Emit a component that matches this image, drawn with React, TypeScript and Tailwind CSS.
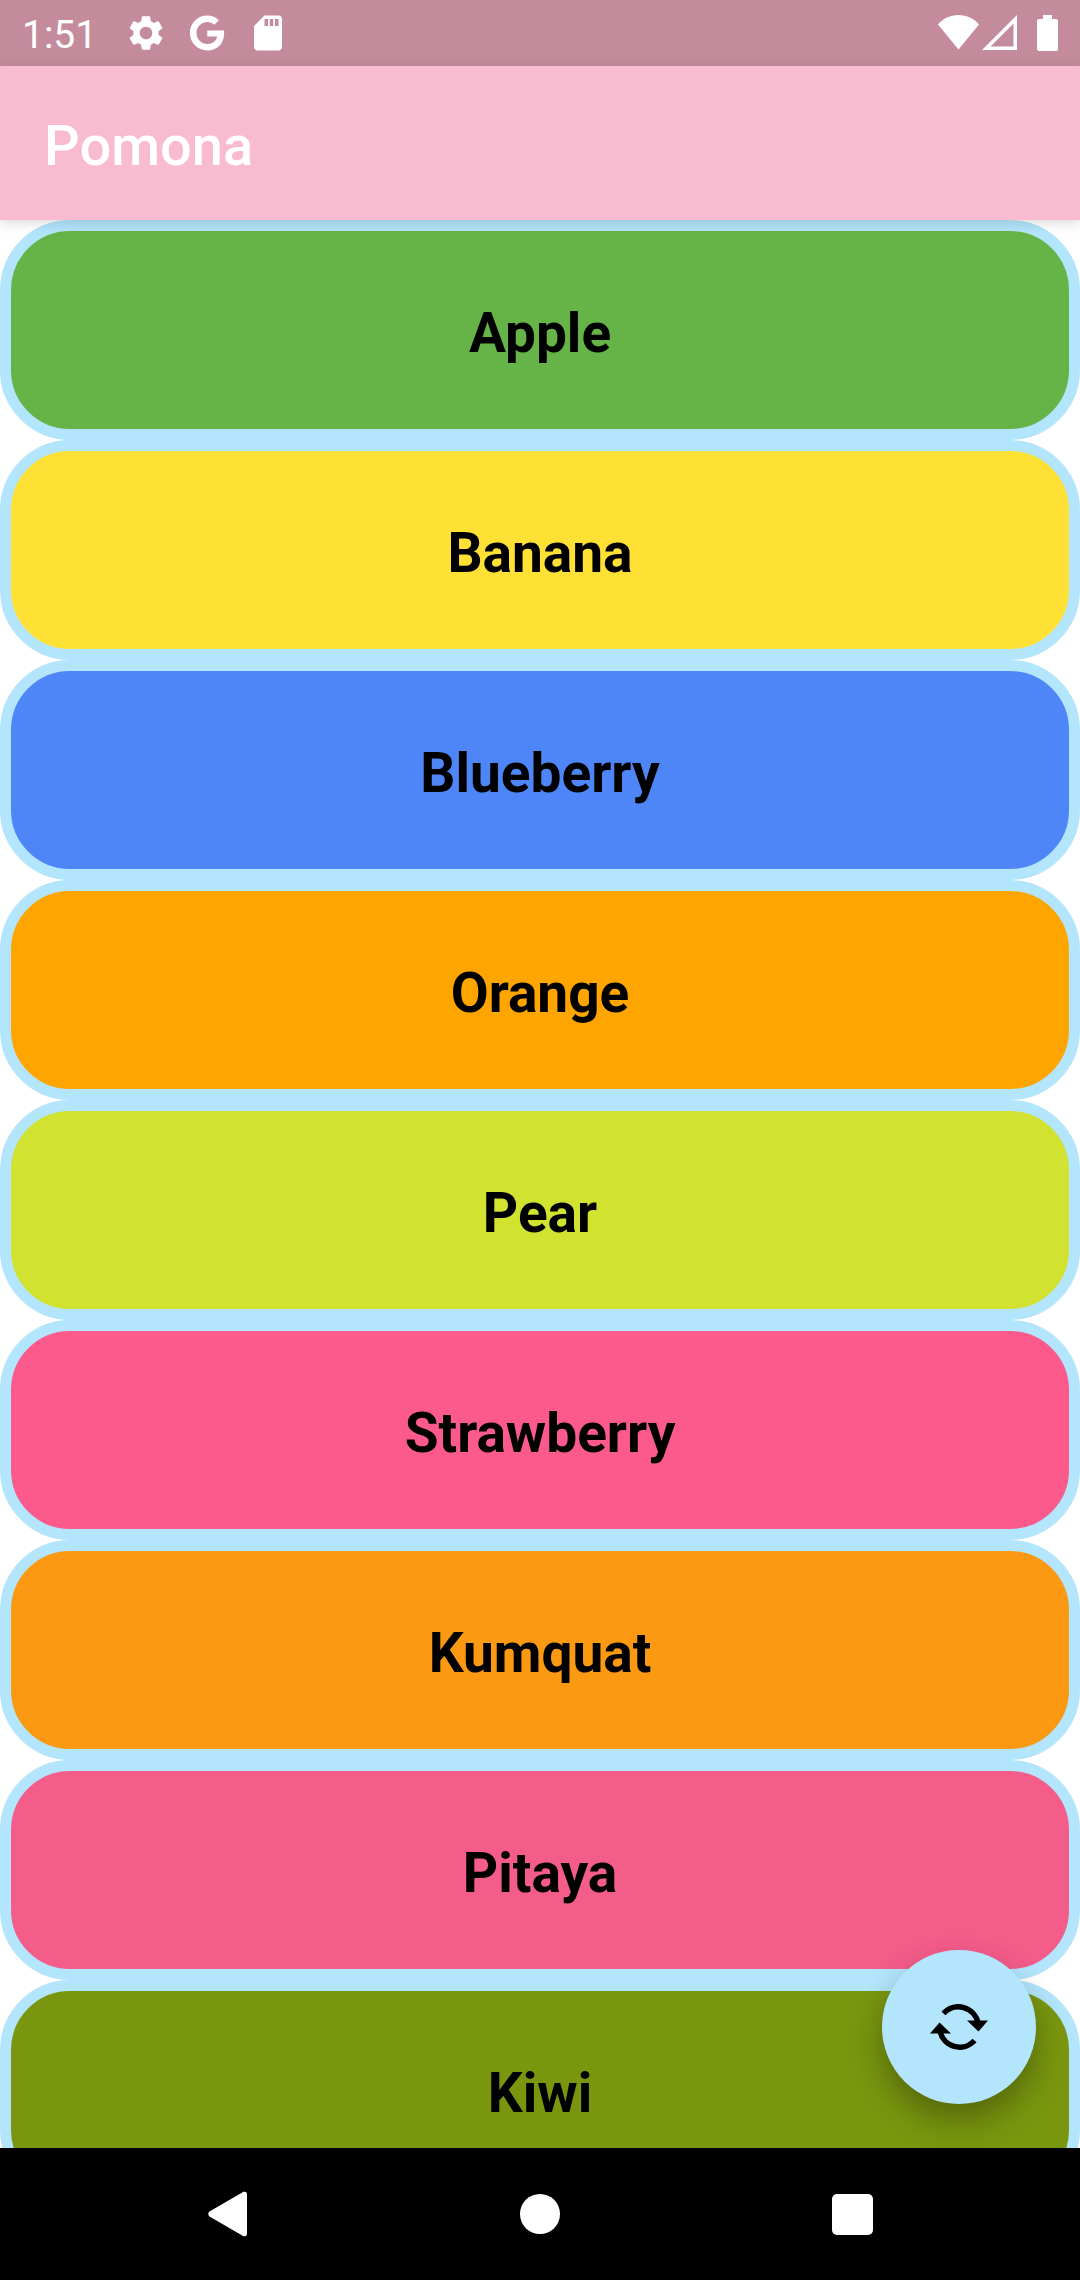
import { MdSdCard, MdSettings } from "react-icons/md";

const fruits = [
  { name: "Apple", color: "bg-[#66b447]" },
  { name: "Banana", color: "bg-[#ffe135]" },
  { name: "Blueberry", color: "bg-[#4f86f7]" },
  { name: "Orange", color: "bg-[#ffa500]" },
  { name: "Pear", color: "bg-[#d1e231]" },
  { name: "Strawberry", color: "bg-[#fc5a8d]" },
  { name: "Kumquat", color: "bg-[#fb9912]" },
  { name: "Pitaya", color: "bg-[#f45c8a]" },
  { name: "Kiwi", color: "bg-[#7a960f]" },
];

function StatusBar() {
  return (
    <div className="flex h-[66px] shrink-0 items-center justify-between bg-[#c48b9c] px-[22px] text-white">
      <div className="flex items-center">
        <time className="w-[103px] pt-1 text-[39px] leading-none">1:51</time>
        <div className="flex items-center gap-[19px]">
          <MdSettings className="size-[42px]" />
          <svg viewBox="0 0 488 512" className="h-9 w-[42px]" fill="currentColor">
            <path d="M488 261.8C488 403.3 391.1 504 248 504 110.8 504 0 393.2 0 256S110.8 8 248 8c66.8 0 123 24.5 166.3 64.9l-67.5 64.9C258.5 52.6 94.3 116.6 94.3 256c0 86.5 69.1 156.6 153.7 156.6 98.2 0 135-70.4 140.8-106.9H248v-85.3h236.1c2.3 12.7 3.9 24.9 3.9 41.4z" />
          </svg>
          <MdSdCard className="size-[42px]" />
        </div>
      </div>
      <div className="flex items-center">
        <svg viewBox="0 0 41 36" className="mr-[3px] h-9 w-[41px]" fill="currentColor">
          <path d="M20.5 34.5 0 9.5C5 3.5 12.5 0 20.5 0S36 3.5 41 9.5Z" />
        </svg>
        <svg viewBox="0 0 35 36" className="mr-5 h-9 w-[35px]" fill="currentColor">
          <path fillRule="evenodd" d="M35 0v35H0ZM31.5 8.500 8.500 31.500h23Z" />
        </svg>
        <svg viewBox="0 0 21 36" className="h-9 w-[21px]" fill="currentColor">
          <path d="M6 0h9v4h4a2 2 0 0 1 2 2v28a2 2 0 0 1-2 2H2a2 2 0 0 1-2-2V6a2 2 0 0 1 2-2h4Z" />
        </svg>
      </div>
    </div>
  );
}

function SyncIcon() {
  return (
    <svg viewBox="0 0 58 46" className="h-[46px] w-[58px]" fill="none">
      <path d="M13.5 9.5A20 20 0 0 1 48 19M44.5 36.5A20 20 0 0 1 10 27" stroke="currentColor" strokeWidth="5.5" />
      <path d="M37 16.5h21L48.5 27.5ZM0 29.5h21L9.5 18.5Z" fill="currentColor" />
    </svg>
  );
}

function NavigationBar() {
  return (
    <nav className="grid h-[132px] shrink-0 grid-cols-3 items-center justify-items-center bg-black px-18 text-white">
      <button aria-label="Back" className="flex w-[100px] justify-center">
        <svg viewBox="0 0 40 46" className="h-[46px] w-10" fill="currentColor">
          <path d="M1.5 20.5 35.5.8Q39 0 39 3v40q0 3-3.500 2.200L1.500 25.500Q-1 23 1.500 20.500Z" />
        </svg>
      </button>
      <button aria-label="Home" className="flex w-[100px] justify-center">
        <span className="size-10 rounded-full bg-white" />
      </button>
      <button aria-label="Recent apps" className="flex w-[100px] justify-center">
        <span className="size-[41px] rounded-[5px] bg-white" />
      </button>
    </nav>
  );
}

export default function App() {
  return (
    <div className="flex h-screen flex-col bg-white font-[Roboto,sans-serif]">
      <StatusBar />
      <header className="z-10 flex h-[154px] shrink-0 items-center bg-[#f8bbd0] px-11 pt-1.5 shadow-[0_3px_12px_rgba(0,0,0,0.15)]">
        <h1 className="text-[56px] leading-[64px] font-medium text-white">Pomona</h1>
      </header>
      <main className="relative min-h-0 flex-1 overflow-hidden">
        <ul>
          {fruits.map((fruit) => (
            <li key={fruit.name}>
              <button
                className={`flex h-[220px] w-full items-center justify-center rounded-[70px] border-[11px] border-[#b3e5fc] pt-1.5 text-[55px] leading-[64px] font-bold text-black ${fruit.color}`}
              >
                {fruit.name}
              </button>
            </li>
          ))}
        </ul>
        <button
          aria-label="Refresh"
          className="absolute right-11 bottom-11 flex size-[154px] items-center justify-center rounded-full bg-[#b3e5fc] text-black shadow-[0_16px_32px_rgba(0,0,0,0.3)]"
        >
          <SyncIcon />
        </button>
      </main>
      <NavigationBar />
    </div>
  );
}
